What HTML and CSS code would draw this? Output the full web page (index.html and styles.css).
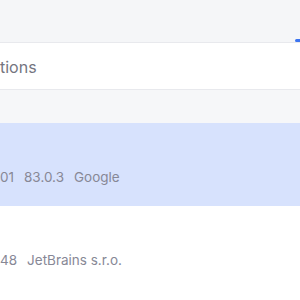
FILE: index.html
```html
<!DOCTYPE html>
<html lang="en">
<head>
    <meta charset="UTF-8">
    <title>Installed applications</title>
    <link rel="stylesheet" href="styles.css">
</head>
<body>
    <div class="top">
        <div class="tab-mark"></div>
    </div>
    <div class="section-title">
        <span class="title-text">tions</span>
    </div>
    <div class="table-head"></div>
    <div class="row selected">
        <div class="meta">
            <span>01</span>
            <span>83.0.3</span>
            <span>Google</span>
        </div>
    </div>
    <div class="row">
        <div class="meta">
            <span>48</span>
            <span>JetBrains s.r.o.</span>
        </div>
    </div>
</body>
</html>
```

FILE: styles.css
```css
body {
    margin: 0;
    font-family: Inter, "Noto Sans", sans-serif;
    background-color: #ffffff;
    overflow: hidden;
}
.top {
    height: 42px;
    background-color: #f5f6f8;
    border-bottom: 1px solid #e8e9ed;
    position: relative;
}
.tab-mark {
    position: absolute;
    right: 0;
    bottom: 0;
    width: 5px;
    height: 3px;
    background-color: #3c74f0;
    border-radius: 2px 0 0 2px;
}
.section-title {
    height: 46px;
    display: flex;
    align-items: center;
    border-bottom: 1px solid #e8e9ed;
}
.title-text {
    font-size: 16px;
    color: #74757f;
    padding-top: 2px;
}
.table-head {
    height: 33px;
    background-color: #f6f7f9;
}
.row {
    height: 83px;
    display: flex;
    align-items: flex-end;
}
.row.selected {
    background-color: #d7e2fd;
}
.meta {
    display: flex;
    gap: 10px;
    font-size: 13.5px;
    color: #878896;
    padding-bottom: 21px;
}
```
